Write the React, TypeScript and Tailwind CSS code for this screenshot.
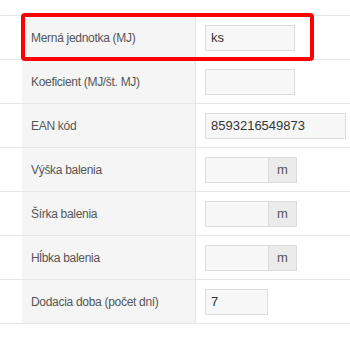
import React from "react";

type Row = {
  label: string;
  value?: string;
  kind: "short" | "wide" | "unit" | "small";
};

const rows: Row[] = [
  { label: "Merná jednotka (MJ)", value: "ks", kind: "short" },
  { label: "Koeficient (MJ/št. MJ)", kind: "short" },
  { label: "EAN kód", value: "8593216549873", kind: "wide" },
  { label: "Výška balenia", kind: "unit" },
  { label: "Šírka balenia", kind: "unit" },
  { label: "Hĺbka balenia", kind: "unit" },
  { label: "Dodacia doba (počet dní)", value: "7", kind: "small" },
];

function Field({ row }: { row: Row }) {
  const base =
    "h-[26px] border border-[#dcdcdc] bg-[#f7f7f7] px-[5px] text-[13px] leading-[24px] text-[#333]";
  if (row.kind === "unit") {
    return (
      <div className="flex">
        <div className={base + " w-[63px] border-r-0"}></div>
        <div className="flex h-[26px] w-[29px] items-center justify-center border border-[#dcdcdc] bg-[#ebebeb] text-[13px] text-[#555]">
          m
        </div>
      </div>
    );
  }
  const w =
    row.kind === "wide" ? "w-[141px]" : row.kind === "small" ? "w-[63px]" : "w-[90px]";
  return <div className={base + " " + w}>{row.value}</div>;
}

export default function App() {
  return (
    <div
      className="relative h-[350px] w-[350px] bg-white pt-[15px]"
      style={{ fontFamily: '"Liberation Sans", Arial, sans-serif' }}
    >
      <div className="border-t border-[#e6e6e6]">
        {rows.map((row) => (
          <div key={row.label} className="flex h-[44px] border-b border-[#e6e6e6]">
            <div className="w-[22px]"></div>
            <div className="flex w-[174px] items-center border-r border-[#e6e6e6] bg-[#f5f5f5] pl-[9px] text-[12px] tracking-[-0.3px] text-[#555]">
              {row.label}
            </div>
            <div className="flex flex-1 items-center pl-[9px]">
              <Field row={row} />
            </div>
          </div>
        ))}
      </div>
      {/* highlight around the first row */}
      <div className="absolute left-[21px] top-[13px] h-[48px] w-[293px] rounded-[4px] border-[4px] border-[#ff0000]"></div>
    </div>
  );
}
